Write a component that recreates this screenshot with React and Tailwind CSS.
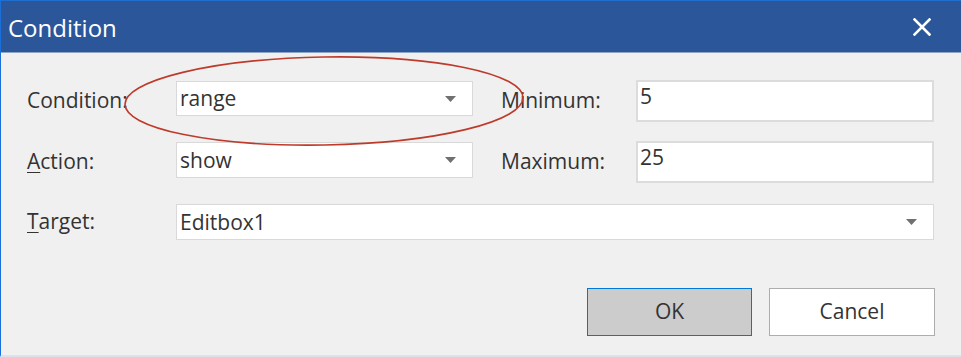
import React from "react";

function Caret() {
  return (
    <svg width="11" height="6" viewBox="0 0 11 6" className="shrink-0">
      <path d="M0 0 L11 0 L5.5 6 Z" fill="#707070" />
    </svg>
  );
}

function Combo({ value, className }) {
  return (
    <div
      className={
        "flex items-center justify-between bg-white border border-[#d9d9d9] pl-[3px] pr-[16px] text-[21px] text-[#333333] " +
        className
      }
    >
      <span className="leading-none">{value}</span>
      <Caret />
    </div>
  );
}

function Input({ value }) {
  return (
    <div className="w-[298px] h-[42px] bg-white border-2 border-[#dcdcdc] pl-[2px] pt-[1px] text-[21px] leading-[26px] text-[#333333]">
      {value}
    </div>
  );
}

export default function App() {
  return (
    <div
      className="relative w-[961px] h-[357px] overflow-hidden bg-[#f0f0f0] border-l border-[#1a6fd8] border-b-2 border-b-[#dbe2ea] flex flex-col"
      style={{ fontFamily: '"Open Sans", "Noto Sans", sans-serif' }}
    >
      <div className="h-[53px] shrink-0 bg-[#2b579a] border-t border-[#1f6fd0] border-b border-b-[#8ea5c6] flex items-center justify-between pl-[7px] pr-[30px]">
        <span className="text-white text-[24px] leading-none pt-[2px]">Condition</span>
        <svg width="18" height="18" viewBox="0 0 18 18">
          <path d="M1.5 1.5 L16.5 16.5 M16.5 1.5 L1.5 16.5" stroke="white" strokeWidth="2.6" strokeLinecap="square" />
        </svg>
      </div>

      <div className="flex flex-col pt-[27px] pl-[26px] pr-[26px] text-[#333333]">
        <div className="flex items-start h-[41px]">
          <div className="w-[149px] h-[41px] flex items-center text-[21px]">Condition:</div>
          <Combo value="range" className="w-[297px] h-[35px] mt-[1px]" />
          <div className="w-[135px] ml-[28px] h-[41px] flex items-center text-[21px]">Minimum:</div>
          <Input value="5" />
        </div>

        <div className="flex items-start h-[42px] mt-[20px]">
          <div className="w-[149px] h-[41px] flex items-center text-[21px]">
            <span><span className="underline underline-offset-[3px] decoration-1">A</span>ction:</span>
          </div>
          <Combo value="show" className="w-[297px] h-[36px] mt-[1px]" />
          <div className="w-[135px] ml-[28px] h-[41px] flex items-center text-[21px]">Maximum:</div>
          <Input value="25" />
        </div>

        <div className="flex items-center h-[36px] mt-[21px]">
          <div className="w-[149px] flex items-center text-[21px]">
            <span><span className="underline underline-offset-[3px] decoration-1">T</span>arget:</span>
          </div>
          <Combo value="Editbox1" className="w-[758px] h-[36px]" />
        </div>

        <div className="flex justify-end gap-[17px] mt-[48px]">
          <div className="w-[165px] h-[48px] bg-[#cccccc] border border-[#0078d7] flex items-center justify-center text-[21px] text-[#333333]">
            OK
          </div>
          <div className="w-[166px] h-[48px] bg-white border border-[#adadad] flex items-center justify-center text-[21px] text-[#333333]">
            Cancel
          </div>
        </div>
      </div>

      <svg
        className="absolute left-0 top-0 pointer-events-none"
        width="961"
        height="357"
        viewBox="0 0 961 357"
      >
        <ellipse
          cx="323"
          cy="101"
          rx="199"
          ry="44"
          transform="rotate(-1 323 101)"
          fill="none"
          stroke="#be3a2b"
          strokeWidth="1.6"
        />
      </svg>
    </div>
  );
}
